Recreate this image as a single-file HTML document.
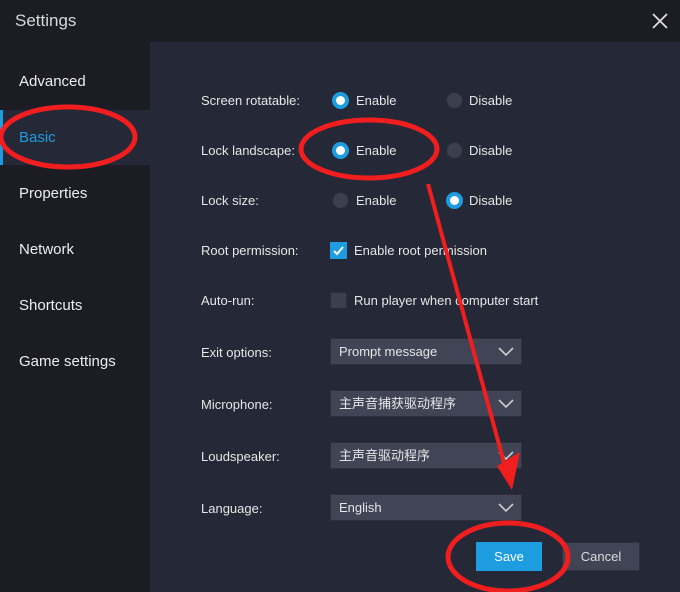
<!DOCTYPE html>
<html><head><style>
*{margin:0;padding:0;box-sizing:border-box}
body{width:680px;height:592px;background:#1c1d24;font-family:"Liberation Sans","Noto Sans CJK SC",sans-serif;position:relative;overflow:hidden;color:#e6e6e6}
.title{position:absolute;left:15px;top:11px;font-size:17px;color:#d8d8d8}
.side div{position:absolute;left:19px;font-size:15px;color:#eee}
.sel{position:absolute;left:0;top:110px;width:150px;height:55px;background:#252836;border-left:3px solid #1e9ce0}
.content{position:absolute;left:150px;top:42px;width:530px;height:550px;background:#252836}
.lbl{position:absolute;left:201px;font-size:13px;color:#e6e6e6}
.r{position:absolute;width:17px;height:17px;border-radius:50%;background:#3c3f4d;border:1px solid #2a2c38}
.r.on{background:#fff;border:4px solid #1e9ce0}
.rt{position:absolute;font-size:13px}
.cb{position:absolute;left:330px;width:17px;height:17px;background:#3c3f4d;border:1px solid #2a2c38}
.dd{position:absolute;left:330px;width:192px;height:27px;background:#404455;border:1px solid #2e303c;font-size:13px;padding-left:8px;line-height:25px}
.dd span{display:inline-block;line-height:25px;height:25px}
.dd svg{position:absolute;right:7px;top:8px}
.btn{position:absolute;top:542px;height:29px;font-size:13px;text-align:center;line-height:29px}
</style></head><body>
<div class="title">Settings</div>
<svg width="16" height="16" style="position:absolute;left:652px;top:13px"><path d="M1 1 L15 15 M15 1 L1 15" stroke="#ddd" stroke-width="1.8"/></svg>
<div class="sel"></div>
<div class="side">
<div style="top:73px">Advanced</div>
<div style="top:129px;color:#1e9ce0">Basic</div>
<div style="top:185px">Properties</div>
<div style="top:241px">Network</div>
<div style="top:297px">Shortcuts</div>
<div style="top:353px">Game settings</div>
</div>
<div class="content"></div>
<div class="lbl" style="top:93px">Screen rotatable:</div>
<div class="lbl" style="top:143px">Lock landscape:</div>
<div class="lbl" style="top:193px">Lock size:</div>
<div class="lbl" style="top:243px">Root permission:</div>
<div class="lbl" style="top:293px">Auto-run:</div>
<div class="lbl" style="top:345px">Exit options:</div>
<div class="lbl" style="top:397px">Microphone:</div>
<div class="lbl" style="top:449px">Loudspeaker:</div>
<div class="lbl" style="top:501px">Language:</div>

<div class="r on" style="left:332px;top:92px"></div><div class="rt" style="left:356px;top:93px">Enable</div>
<div class="r" style="left:446px;top:92px"></div><div class="rt" style="left:469px;top:93px">Disable</div>
<div class="r on" style="left:332px;top:142px"></div><div class="rt" style="left:356px;top:143px">Enable</div>
<div class="r" style="left:446px;top:142px"></div><div class="rt" style="left:469px;top:143px">Disable</div>
<div class="r" style="left:332px;top:192px"></div><div class="rt" style="left:356px;top:193px">Enable</div>
<div class="r on" style="left:446px;top:192px"></div><div class="rt" style="left:469px;top:193px">Disable</div>

<div class="cb" style="top:242px;background:#1e9ce0;border-color:#1e9ce0"><svg width="15" height="15"><path d="M3 8 L6 11 L12 4" stroke="#fff" stroke-width="2" fill="none"/></svg></div>
<div class="rt" style="left:354px;top:243px">Enable root permission</div>
<div class="cb" style="top:292px"></div>
<div class="rt" style="left:354px;top:293px">Run player when computer start</div>

<div class="dd" style="top:338px"><span>Prompt message</span><svg width="16" height="10"><path d="M1 1 L8 8 L15 1" stroke="#ccc" stroke-width="1.6" fill="none"/></svg></div>
<div class="dd" style="top:390px"><span>主声音捕获驱动程序</span><svg width="16" height="10"><path d="M1 1 L8 8 L15 1" stroke="#ccc" stroke-width="1.6" fill="none"/></svg></div>
<div class="dd" style="top:442px"><span>主声音驱动程序</span><svg width="16" height="10"><path d="M1 1 L8 8 L15 1" stroke="#ccc" stroke-width="1.6" fill="none"/></svg></div>
<div class="dd" style="top:494px"><span>English</span><svg width="16" height="10"><path d="M1 1 L8 8 L15 1" stroke="#ccc" stroke-width="1.6" fill="none"/></svg></div>

<div class="btn" style="left:476px;width:66px;background:#1e9ce0;color:#fff">Save</div>
<div class="btn" style="left:562px;width:78px;background:#404455;border:1px solid #2e303c;color:#ddd;line-height:27px">Cancel</div>

<svg width="680" height="592" style="position:absolute;left:0;top:0">
<g fill="none" stroke="#f01e1e" stroke-width="5">
<ellipse cx="68" cy="137" rx="67" ry="30"/>
<ellipse cx="369" cy="149" rx="68" ry="29"/>
<ellipse cx="508" cy="557" rx="60" ry="34"/>
<path d="M428 184 L506 470" stroke-width="4"/>
</g>
<path d="M497 466 L520 452 L512 490 Z" fill="#f01e1e"/>
</svg>
</body></html>
